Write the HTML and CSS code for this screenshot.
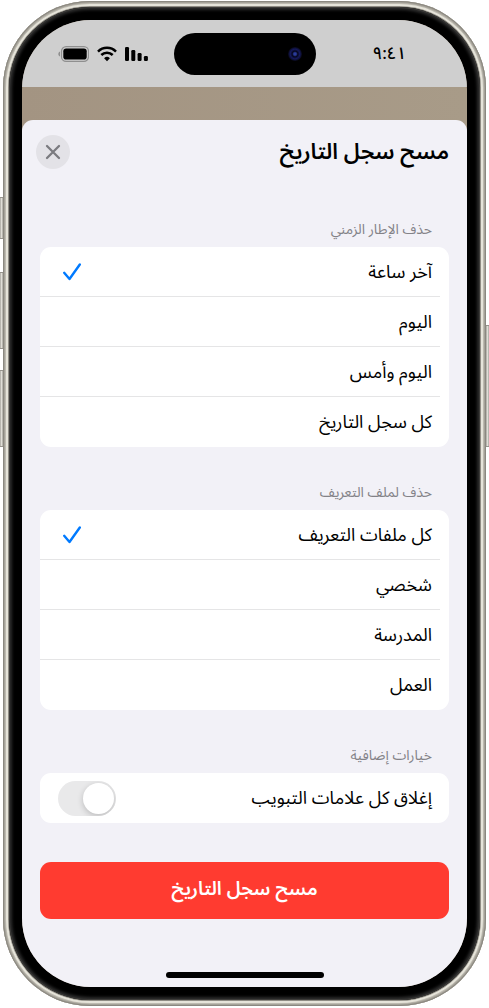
FILE: index.html
```html
<!DOCTYPE html>
<html lang="ar" dir="rtl">
<head>
    <meta charset="UTF-8">
    <meta name="viewport" content="width=device-width, initial-scale=1.0">
    <title>مسح سجل التاريخ</title>
    <link rel="stylesheet" href="styles.css">
</head>
<body>
    <div class="phone">
        <span class="side-btn action"></span>
        <span class="side-btn vol-up"></span>
        <span class="side-btn vol-down"></span>
        <span class="side-btn power"></span>
        <div class="bezel">
            <div class="screen">
                <div class="status-bar">
                    <div class="time" dir="ltr">٩:٤١</div>
                    <div class="island"><span class="camera"></span></div>
                    <div class="status-icons">
                        <svg width="23" height="16" viewBox="0 0 23 16">
                            <rect x="0" y="1" width="4" height="14" rx="1.3"/>
                            <rect x="6.3" y="4" width="4" height="11" rx="1.3"/>
                            <rect x="12.6" y="7" width="4" height="8" rx="1.3"/>
                            <rect x="18.9" y="10" width="4" height="5" rx="1.3"/>
                        </svg>
                        <svg width="20" height="16" viewBox="0 0 20 16" fill="none" stroke="#000" stroke-width="2.5">
                            <path d="M1 5.6a12.7 12.7 0 0 1 18 0"/>
                            <path d="M4.3 9a8.1 8.1 0 0 1 11.4 0"/>
                            <path d="M10 15.2l-2.9-2.9a4.1 4.1 0 0 1 5.8 0z" fill="#000" stroke="none"/>
                        </svg>
                        <svg width="31" height="16" viewBox="0 0 31 16">
                            <rect x="3.5" y=".7" width="27" height="14.6" rx="4.6" fill="none" stroke="#8f8f8f" stroke-width="1.2"/>
                            <rect x="5.3" y="2.5" width="23.4" height="11" rx="2.8"/>
                            <path d="M2 5.5v5C.9 10.1.3 9.1.3 8S.9 5.9 2 5.5z" fill="#8f8f8f"/>
                        </svg>
                    </div>
                </div>

                <form class="sheet">
                    <header class="sheet-header">
                        <h1>مسح سجل التاريخ</h1>
                        <button type="button" class="close-btn" aria-label="إغلاق">
                            <svg width="16" height="16" viewBox="0 0 16 16" fill="none" stroke="#7b7b80" stroke-width="2.3" stroke-linecap="round">
                                <path d="M2 2l12 12M14 2L2 14"/>
                            </svg>
                        </button>
                    </header>

                    <fieldset class="group">
                        <legend>حذف الإطار الزمني</legend>
                        <div class="card">
                            <label class="row">آخر ساعة
                                <input type="radio" name="range" checked>
                                <svg class="check" width="18" height="18" viewBox="0 0 18 18"><path d="M1.2 9.8l5.300 6.200L16.800 1.500"/></svg>
                            </label>
                            <label class="row">اليوم
                                <input type="radio" name="range">
                                <svg class="check" width="18" height="18" viewBox="0 0 18 18"><path d="M1.2 9.8l5.300 6.200L16.800 1.500"/></svg>
                            </label>
                            <label class="row">اليوم وأمس
                                <input type="radio" name="range">
                                <svg class="check" width="18" height="18" viewBox="0 0 18 18"><path d="M1.2 9.8l5.300 6.200L16.800 1.500"/></svg>
                            </label>
                            <label class="row">كل سجل التاريخ
                                <input type="radio" name="range">
                                <svg class="check" width="18" height="18" viewBox="0 0 18 18"><path d="M1.2 9.8l5.300 6.200L16.800 1.500"/></svg>
                            </label>
                        </div>
                    </fieldset>

                    <fieldset class="group">
                        <legend>حذف لملف التعريف</legend>
                        <div class="card">
                            <label class="row">كل ملفات التعريف
                                <input type="radio" name="profile" checked>
                                <svg class="check" width="18" height="18" viewBox="0 0 18 18"><path d="M1.2 9.8l5.300 6.200L16.800 1.500"/></svg>
                            </label>
                            <label class="row">شخصي
                                <input type="radio" name="profile">
                                <svg class="check" width="18" height="18" viewBox="0 0 18 18"><path d="M1.2 9.8l5.300 6.200L16.800 1.500"/></svg>
                            </label>
                            <label class="row">المدرسة
                                <input type="radio" name="profile">
                                <svg class="check" width="18" height="18" viewBox="0 0 18 18"><path d="M1.2 9.8l5.300 6.200L16.800 1.500"/></svg>
                            </label>
                            <label class="row">العمل
                                <input type="radio" name="profile">
                                <svg class="check" width="18" height="18" viewBox="0 0 18 18"><path d="M1.2 9.8l5.300 6.200L16.800 1.500"/></svg>
                            </label>
                        </div>
                    </fieldset>

                    <fieldset class="group">
                        <legend>خيارات إضافية</legend>
                        <div class="card">
                            <label class="row">إغلاق كل علامات التبويب
                                <input type="checkbox" class="switch" role="switch">
                            </label>
                        </div>
                    </fieldset>

                    <button type="button" class="clear-btn">مسح سجل التاريخ</button>
                    <div class="home-bar"></div>
                </form>
            </div>
        </div>
    </div>
</body>
</html>
```

FILE: styles.css
```css
* { box-sizing: border-box; margin: 0; padding: 0; }
body { background: #fff; color: #000; padding: 1px 3px; font-family: "Noto Sans Arabic", "Noto Sans", "DejaVu Sans", sans-serif; font-size: 18px; }

/* Device frame */
.phone { position: relative; padding: 6px; border-radius: 87px; background: #8f8c84; box-shadow: inset 0 0 0 1px #8b8880, inset 0 0 0 2px #a5a299, inset 0 0 0 3px #bdbab0, inset 0 0 0 5px #e6e4da; }
.bezel { padding: 13px; border-radius: 81px; background: #000; box-shadow: inset 0 0 0 1px #3c3b39, inset 0 0 3px 3px #2c2c2c; }
.screen { border-radius: 69px; overflow: hidden; background: linear-gradient(90deg, #a39482, #a89b88); }
.side-btn { position: absolute; width: 3px; background: linear-gradient(90deg, #a5a39c, #e0ded7, #a5a39c); border: 1px solid #96938c; border-width: 1px 0; }
.action { left: -3px; top: 196px; height: 42px; }
.vol-up { left: -3px; top: 271px; height: 77px; }
.vol-down { left: -3px; top: 369px; height: 77px; }
.power { right: -3px; top: 324px; height: 122px; }

/* Status bar */
.status-bar { display: grid; grid-template-columns: 1fr 142px 1fr; align-items: center; height: 67px; background: #cfcfcf; }
.time { padding-left: 57px; font-size: 17px; font-weight: 500; line-height: 24px; }
.island { display: flex; direction: ltr; justify-content: flex-end; align-items: center; height: 42px; padding-right: 14px; border-radius: 21px; background: #000; }
.camera { width: 14px; height: 14px; border-radius: 50%; background: radial-gradient(circle, #2b3c9c 0 12%, #05061c 28%, #15195c 48%, #080818 70%); }
.status-icons { display: flex; gap: 8px; padding-right: 26px; }

/* Sheet */
.sheet { margin-top: 33px; padding: 0 18px 9px; border-radius: 11px 11px 0 0; background: #f2f1f7; }
.sheet-header { display: flex; justify-content: space-between; align-items: center; height: 64px; }
.sheet-header h1 { font-size: 22px; font-weight: 600; line-height: 32px; }
.close-btn { display: flex; justify-content: center; align-items: center; width: 34px; height: 34px; margin-left: -4px; border: none; border-radius: 50%; background: #e3e2e7; cursor: pointer; }

.group { border: none; min-width: 0; }
.group legend { padding: 36px 17px 7px; font-size: 14px; line-height: 20px; color: #838287; }
.card { border-radius: 11px; background: #fff; overflow: hidden; }
.row { display: flex; align-items: center; height: 50px; padding: 0 17px 0 23px; background: linear-gradient(#e5e5e6, #e5e5e6) left bottom / calc(100% - 9px) 1px no-repeat; cursor: pointer; }
.row:last-child { background: none; }
.row input { appearance: none; margin-right: auto; }
.check { visibility: hidden; fill: none; stroke: #007aff; stroke-width: 2.4; stroke-linecap: round; stroke-linejoin: round; }
.row input:checked + .check { visibility: visible; }

.row .switch { width: 58px; height: 35px; margin-left: -5px; padding: 2px; border-radius: 18px; background: #e9e9ea; overflow: hidden; cursor: pointer; }
.switch::before { content: ""; display: block; width: 31px; height: 31px; border-radius: 50%; background: #fff; box-shadow: 0 2px 6px rgba(0, 0, 0, .2); }
.row .switch:checked { background: #34c759; }
.switch:checked::before { margin-right: 23px; }

.clear-btn { display: block; width: 100%; height: 57px; margin-top: 39px; padding-bottom: 3px; border: none; border-radius: 11px; background: #ff3b30; color: #fff; font-family: inherit; font-size: 19px; font-weight: 600; cursor: pointer; }
.home-bar { width: 158px; height: 6px; margin: 53px auto 0; border-radius: 3px; background: #000; }
```
